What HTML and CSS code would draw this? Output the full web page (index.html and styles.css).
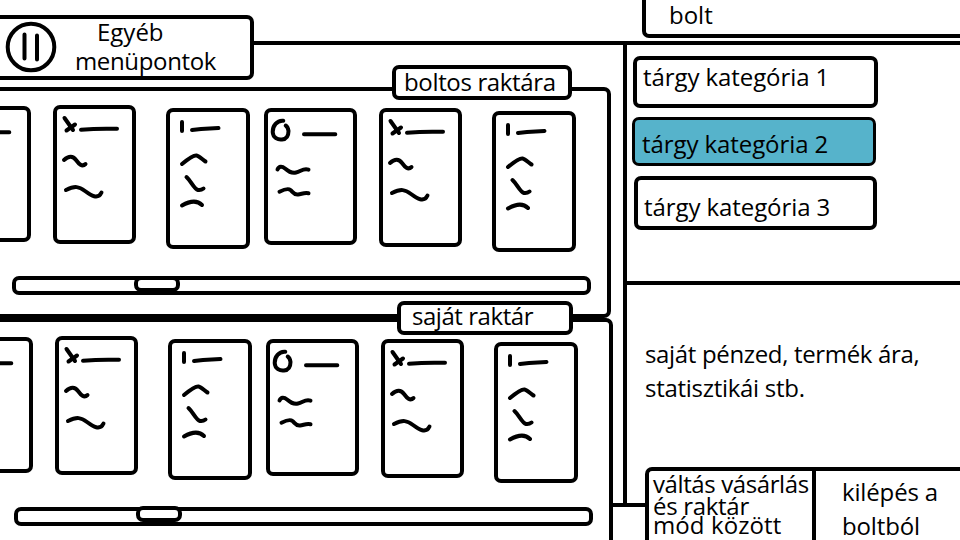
FILE: index.html
```
<!DOCTYPE html>
<html lang="hu">
<head>
<meta charset="utf-8">
<title>Bolt</title>
<link rel="stylesheet" href="styles.css">
</head>
<body>
<svg class="defs" aria-hidden="true">
  <symbol id="doodle-x" overflow="visible"><path d="M11.5 13L20 25M22 19.5L13.5 25.500M28 24.700Q45 23.200 64 23.800M11 55C16 50.500 20 51 23 55S29 62.500 32.500 59M13 85C22 80.500 26 81.500 32 86S45 95 48.500 87.500"/></symbol>
  <symbol id="doodle-i" overflow="visible"><path d="M16 14V23M26 22L35 21L52.500 20M16 56C22 51 28 47 30.500 47.500S36 51 39.500 53.500M20.500 69C25 73 28 81 32 82Q35 82.500 37.500 80.500M16 97.500Q29 90 36 97"/></symbol>
  <symbol id="doodle-o" overflow="visible"><path d="M19.300 12.700C13 12 8.500 18 8.700 24C9 30 14 32 18 31.500C23 31 24.500 27 24.500 23Q24 19 21.700 17.500M40 26.300H71.300M13.500 61.500C15 58 18 58 21 60.500S27 65.500 32 64.500S39 60 44.500 61.700M15.500 83.700C20 81.500 24 80 26.500 82S30 87 34 86.500S40 84.500 44.500 85.300"/></symbol>
</svg>
<div class="app">
  <header class="topbar">
    <div class="menu">
      <svg class="pause" viewBox="0 0 52 52"><circle cx="26" cy="26" r="23.300"/><path d="M19.500 13.500V37.500M32 14.500V38.500"/></svg>
      <div class="menu-text"><span class="line-a">Egyéb</span><span class="line-b">menüpontok</span></div>
    </div>
    <div class="shop-title"><span>bolt</span></div>
  </header>
  <main class="body">
    <section class="stocks">
      <div class="stock stock-shop">
        <h2 class="tag"><span>boltos raktára</span></h2>
        <div class="cards">
          <div class="card card-cut"><svg><use href="#doodle-o"/></svg></div>
          <div class="card card-1"><svg><use href="#doodle-x"/></svg></div>
          <div class="card card-2"><svg><use href="#doodle-i"/></svg></div>
          <div class="card card-3"><svg><use href="#doodle-o"/></svg></div>
          <div class="card card-4"><svg><use href="#doodle-x"/></svg></div>
          <div class="card card-5"><svg><use href="#doodle-i"/></svg></div>
        </div>
        <div class="track"><div class="thumb"></div></div>
      </div>
      <div class="stock stock-own">
        <h2 class="tag"><span>saját raktár</span></h2>
        <div class="cards">
          <div class="card card-cut"><svg><use href="#doodle-o"/></svg></div>
          <div class="card card-1"><svg><use href="#doodle-x"/></svg></div>
          <div class="card card-2"><svg><use href="#doodle-i"/></svg></div>
          <div class="card card-3"><svg><use href="#doodle-o"/></svg></div>
          <div class="card card-4"><svg><use href="#doodle-x"/></svg></div>
          <div class="card card-5"><svg><use href="#doodle-i"/></svg></div>
        </div>
        <div class="track"><div class="thumb"></div></div>
      </div>
    </section>
    <div class="rail"></div>
    <aside class="side">
      <div class="categories">
        <div class="cat cat-1"><span>tárgy kategória 1</span></div>
        <div class="cat cat-2"><span>tárgy kategória 2</span></div>
        <div class="cat cat-3"><span>tárgy kategória 3</span></div>
      </div>
      <div class="info"><span class="info-a">saját pénzed, termék ára,</span><span class="info-b">statisztikái stb.</span></div>
      <div class="bottom">
        <div class="connector"></div>
        <div class="actions">
          <div class="switch"><span class="sw-a">váltás vásárlás</span><span class="sw-b">és raktár</span><span class="sw-c">mód között</span></div>
          <div class="exit"><span class="ex-a">kilépés a</span><span class="ex-b">boltból</span></div>
        </div>
      </div>
    </aside>
  </main>
</div>
</body>
</html>
```
FILE: styles.css
```
* { box-sizing: border-box; }
body { margin: 0; background: #fff; color: #000; font: 24px/30px "Open Sans", "Noto Sans", sans-serif; }
span { display: block; width: max-content; white-space: nowrap; }
svg { display: block; fill: none; stroke: #000; stroke-width: 4; stroke-linecap: round; stroke-linejoin: round; overflow: visible; }
.defs { width: 0; height: 0; position: absolute; }
.app { width: 960px; height: 540px; overflow: hidden; }

.topbar { display: flex; justify-content: space-between; align-items: flex-start; height: 45px; border-bottom: 4px solid #000; }
.menu { display: flex; width: 254px; height: 65px; margin-top: 15px; border: 4px solid #000; border-left: 0; border-radius: 0 7px 7px 0; background: #fff; position: relative; z-index: 1; }
.pause { width: 52px; height: 52px; margin: 1.500px 0 0 5px; flex: none; }
.menu-text { margin-left: 18px; }
.line-a { margin: -2px 0 0 22px; }
.line-b { margin-top: -1px; letter-spacing: -0.350px; }
.shop-title { width: 318px; height: 38px; border: 4px solid #000; border-width: 0 0 4px 4px; border-radius: 0 0 0 7px; padding-left: 23px; }

.body { display: flex; height: 495px; }
.stocks { width: 623px; flex: none; overflow: hidden; padding-top: 42px; }
.stock { border: 4px solid #000; border-left: 0; }
.stock-shop { width: 611px; height: 231px; border-radius: 0 7px 7px 0; }
.stock-own { width: 613px; height: 240px; border-radius: 0 7px 0 0; border-bottom: 0; }
.tag { margin: -26px 0 0 392px; width: 180px; height: 35px; border: 4px solid #000; border-radius: 7px; background: #fff; font: inherit; line-height: 25px; padding-left: 8px; position: relative; letter-spacing: -0.350px; }
.stock-own .tag { margin: -21px 0 0 397px; width: 176px; height: 34px; padding-left: 11px; line-height: 22px; letter-spacing: -0.450px; }
.cards { display: flex; align-items: flex-start; margin-top: 5px; height: 146px; }
.stock-own .cards { margin: 1px 0 0 2px; height: 147px; }
.card { flex: none; border: 4px solid #000; border-radius: 7px; }
.card svg { margin: -4px; width: 80px; height: 120px; }
.card-cut { width: 93px; height: 136px; margin: 1px 0 0 -62px; }
.card-1 { width: 83px; height: 139px; margin-left: 22px; }
.card-2 { width: 84px; height: 141px; margin: 3px 0 0 30px; }
.card-3 { width: 93px; height: 137px; margin: 3px 0 0 14px; }
.card-4 { width: 83px; height: 139px; margin: 3px 0 0 22px; }
.card-5 { width: 84px; height: 141px; margin: 6px 0 0 30px; }
.track { width: 579px; height: 19px; margin: 25px 0 0 12px; border: 4px solid #000; border-radius: 7px; }
.stock-own .track { margin-left: 14px; margin-top: 24px; }
.thumb { width: 46px; height: 16px; margin: -4px 0 0 118px; border: 4px solid #000; border-radius: 7px; background: #fff; }
.stock-own .thumb { margin-top: -5px; }

.rail { width: 4px; height: 461px; background: #000; flex: none; }
.side { width: 333px; flex: none; }
.categories { height: 240px; padding: 11px 0 0 6px; border-bottom: 4px solid #000; }
.cat { border: 4px solid #000; border-radius: 7px; padding-left: 6px; letter-spacing: -0.080px; }
.cat-1 { width: 245px; height: 52px; line-height: 34px; }
.cat-2 { width: 244px; height: 49px; margin: 9px 0 0 -1px; border-width: 3px; background: #56b3cb; line-height: 48px; padding-left: 7px; }
.cat-3 { width: 243px; height: 54px; margin: 10px 0 0 1px; line-height: 53px; }
.info { height: 182px; padding: 52px 0 0 18px; line-height: 34px; letter-spacing: -0.340px; }
.info-b { letter-spacing: -0.280px; }
.bottom { display: flex; height: 73px; margin-left: -14px; }
.connector { width: 32px; height: 4px; background: #000; margin-top: 36px; flex: none; }
.actions { display: flex; width: 319px; height: 80px; border: 4px solid #000; border-width: 4px 0 0 4px; border-radius: 7px 0 0 0; flex: none; }
.switch { width: 167px; padding: 2px 0 0 4px; border-right: 4px solid #000; line-height: 21px; }
.sw-a { letter-spacing: -0.400px; margin-bottom: 1px; }
.sw-b { letter-spacing: -0.300px; }
.sw-c { margin-top: -2px; letter-spacing: 0.100px; }
.exit { padding: 4px 0 0 26px; line-height: 34px; letter-spacing: -0.150px; }
```
